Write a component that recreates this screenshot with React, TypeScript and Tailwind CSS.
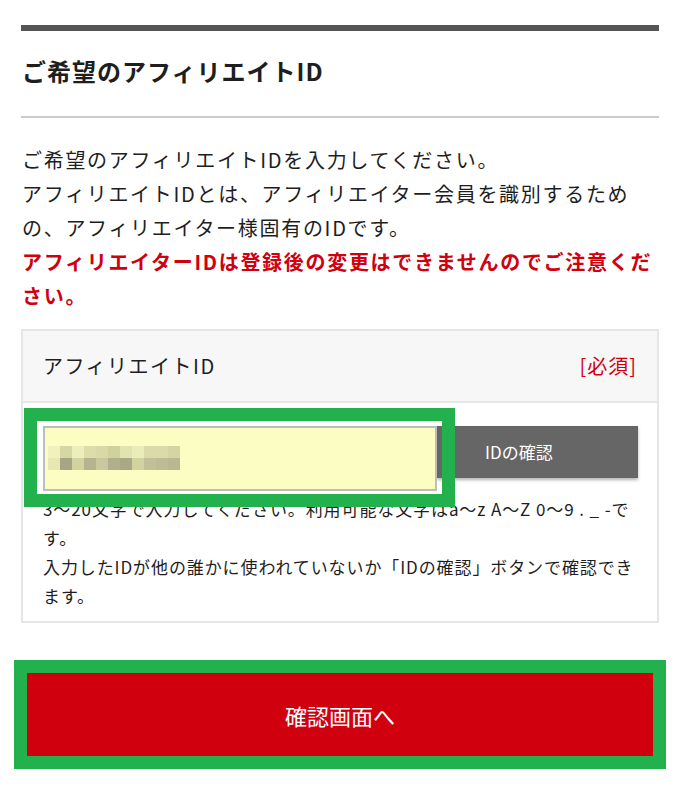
import React from "react";

const MOSAIC_TOP = [
  "bg-[#eff1bf]",
  "bg-[#d6d7a3]",
  "bg-[#eceebb]",
  "bg-[#dcdda9]",
  "bg-[#d8d9a6]",
  "bg-[#d0d19d]",
  "bg-[#e2e4b0]",
  "bg-[#eaedba]",
  "bg-[#dadba8]",
  "bg-[#dadba8]",
  "bg-[#d4d5a2]",
];
const MOSAIC_BOTTOM = [
  "bg-[#e6e8b4]",
  "bg-[#a6a682]",
  "bg-[#d2d4a0]",
  "bg-[#b4b58f]",
  "bg-[#c8c99c]",
  "bg-[#b0b18c]",
  "bg-[#aaa986]",
  "bg-[#d2d4a0]",
  "bg-[#c0c196]",
  "bg-[#bcbd94]",
  "bg-[#b8b990]",
];

// blurred-out value in the input field
const Mosaic = () => (
  <div className="flex flex-col">
    {[MOSAIC_TOP, MOSAIC_BOTTOM].map((row, r) => (
      <div key={r} className="flex">
        {row.map((cls, i) => (
          <div key={i} className={`w-[12px] h-[12px] ${cls}`} />
        ))}
      </div>
    ))}
  </div>
);

const App = () => {
  return (
    <div className="w-[680px] min-h-[800px] bg-white px-[21px] pt-[25px] pb-[31px] text-[#1e1e1e] font-['Noto_Sans_CJK_JP','Noto_Sans',sans-serif]">
      <div className="h-[6px] bg-[#555]" />
      <h2 className="h-[87px] flex items-center pb-[6px] pl-px text-[24px] tracking-[1px] font-bold border-b-2 border-[#cccccc]">
        ご希望のアフィリエイトID
      </h2>

      <div className="mt-[25px] text-[20px] leading-[34px] tracking-[1.7px] pl-px whitespace-nowrap">
        <p>ご希望のアフィリエイトIDを入力してください。</p>
        <p>
          アフィリエイトIDとは、アフィリエイター会員を識別するため
          <br />
          の、アフィリエイター様固有のIDです。
        </p>
        <p className="font-bold text-[#d0000f]">
          アフィリエイターIDは登録後の変更はできませんのでご注意くだ
          <br />
          さい。
        </p>
      </div>

      {/* ID form */}
      <div className="mt-[16px] border-2 border-[#e6e6e6]">
        <div className="h-[72px] flex items-center justify-between px-5 bg-[#f7f7f7] border-b-2 border-[#e6e6e6] text-[20px] tracking-[1.5px]">
          <span>アフィリエイトID</span>
          <span className="text-[#d0000f] tracking-[1px]">[必須]</span>
        </div>
        <div className="pt-[23px] pb-[11px] pl-5 pr-[19px]">
          <div className="flex items-start">
            <div className="relative w-[394px] h-[65px] shrink-0 bg-[#fbfdc2] border-2 border-[#bdbdbd] flex items-center pl-[3px]">
              <div className="-mt-[2px]">
                <Mosaic />
              </div>
              <div className="absolute -left-[21px] -top-[20px] w-[431px] h-[99px] border-[13px] border-[#22b14c]" />
            </div>
            <button className="flex-1 h-[52px] bg-[#666] text-white text-[17px] text-left pl-[48px] shadow-[0_2px_3px_rgba(0,0,0,0.3)]">
              IDの確認
            </button>
          </div>
          <p className="mt-[3px] text-[17px] leading-[29px] tracking-[0.9px] whitespace-nowrap">
            3～20文字で入力してください。利用可能な文字はa～z A～Z 0～9 . _ -で
            <br />
            す。
            <br />
            入力したIDが他の誰かに使われていないか「IDの確認」ボタンで確認でき
            <br />
            ます。
          </p>
        </div>
      </div>

      {/* Submit */}
      <div className="relative mt-[50px] mx-[6px]">
        <button className="w-full h-[84px] bg-[#d0000f] text-white text-[22px]">
          確認画面へ
        </button>
        <div className="absolute -left-[13px] -top-[13px] -right-[13px] -bottom-[12px] border-[13px] border-[#22b14c]" />
      </div>
    </div>
  );
};

export default App;
